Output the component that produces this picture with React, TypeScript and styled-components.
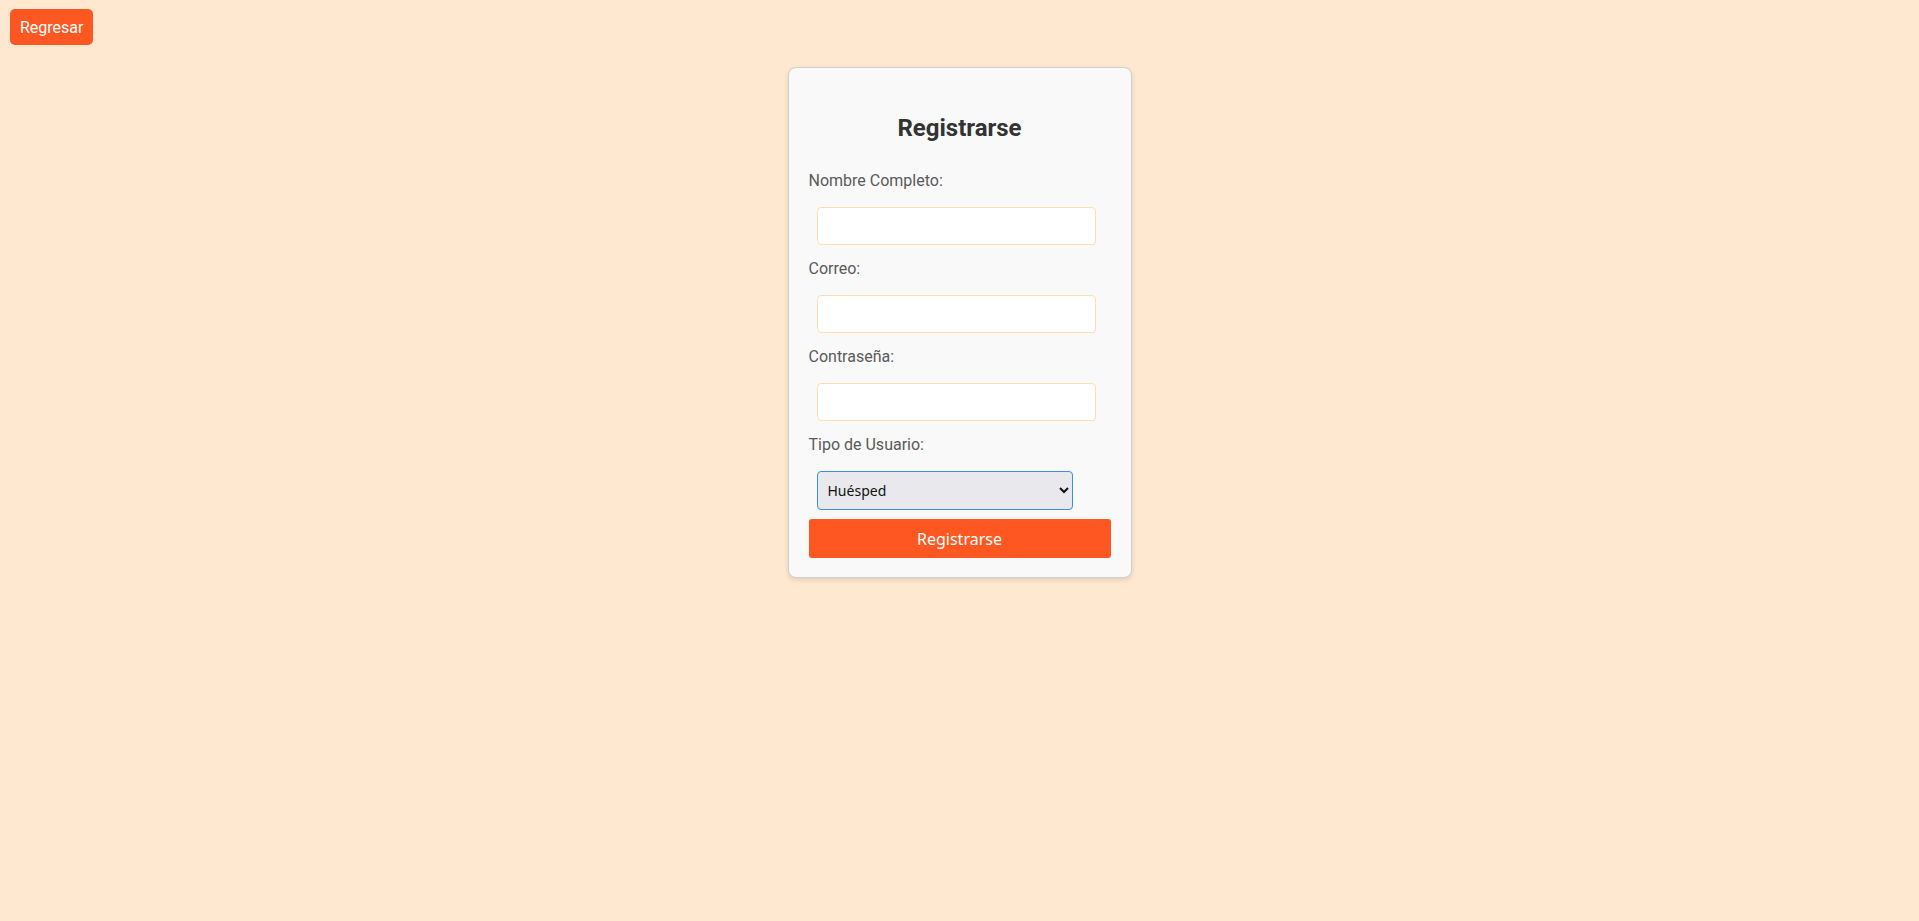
import React from 'react';
import styled, { createGlobalStyle } from 'styled-components';

const GlobalStyle = createGlobalStyle`
	html,
	body {
		margin: 0;
		padding: 0;
		background-color: #ffe8cf;
		font-family: Roboto, 'Liberation Sans', Arial, sans-serif;
	}
	body {
		min-height: 100vh;
	}
`;

const Register: React.FC = () => {
	return (
		<Page>
			<GlobalStyle />
			<BackButton type="button">Regresar</BackButton>
			<Card>
				<Title>Registrarse</Title>
				<Form onSubmit={(e) => e.preventDefault()}>
					<Label htmlFor="nombre">Nombre Completo:</Label>
					<Input id="nombre" type="text" />
					<Label htmlFor="correo">Correo:</Label>
					<Input id="correo" type="email" />
					<Label htmlFor="pass">Contraseña:</Label>
					<Input id="pass" type="password" />
					<Label htmlFor="tipo">Tipo de Usuario:</Label>
					<Select id="tipo" defaultValue="huesped">
						<option value="huesped">Huésped</option>
						<option value="anfitrion">Anfitrión</option>
					</Select>
					<Submit type="submit">Registrarse</Submit>
				</Form>
			</Card>
		</Page>
	);
};

const Page = styled.div`
	min-height: 100vh;
	box-sizing: border-box;
	padding: 9px 10px;
	display: flex;
	flex-direction: column;
	align-items: center;
`;

const BackButton = styled.button`
	align-self: flex-start;
	height: 36px;
	padding: 0 10px;
	border: none;
	border-radius: 5px;
	background-color: #ff5722;
	color: #fff;
	font-family: Roboto, 'Liberation Sans', sans-serif;
	font-size: 16px;
	cursor: pointer;
`;

const Card = styled.div`
	margin-top: 22px;
	width: 344px;
	box-sizing: border-box;
	padding: 0 20px 19px;
	background-color: #f9f9f9;
	border: 1px solid #cfcfcf;
	border-radius: 8px;
	box-shadow: 0 2px 5px rgba(0, 0, 0, 0.12);
`;

const Title = styled.h2`
	margin: 46px 0 29px;
	text-align: center;
	color: #333;
	font-size: 24px;
	line-height: 28px;
	font-weight: 700;
`;

const Form = styled.form`
	display: flex;
	flex-direction: column;
	align-items: flex-start;
`;

const Label = styled.label`
	display: block;
	margin-bottom: 17px;
	color: #5a5a5a;
	font-size: 16px;
	line-height: 19px;
`;

const Input = styled.input`
	box-sizing: border-box;
	width: 279px;
	height: 38px;
	margin: 0 0 14px 8px;
	padding: 8px;
	background-color: #fff;
	border: 1px solid #ffdcb3;
	border-radius: 4px;
	outline: none;
	font-size: 14px;
`;

const Select = styled.select`
	box-sizing: border-box;
	width: 256px;
	height: 39px;
	margin: 0 0 9px 8px;
	padding: 0 6px;
	background-color: #e9e9ed;
	border: 1px solid #3b8cf0;
	border-radius: 4px;
	color: #111;
	font-family: 'Noto Sans', 'DejaVu Sans', sans-serif;
	font-size: 14px;
`;

const Submit = styled.button`
	width: 100%;
	height: 39px;
	border: none;
	border-radius: 3px;
	background-color: #ff5722;
	color: #fff;
	font-family: 'Noto Sans', 'Open Sans', sans-serif;
	font-size: 16px;
	cursor: pointer;
`;

export default Register;
